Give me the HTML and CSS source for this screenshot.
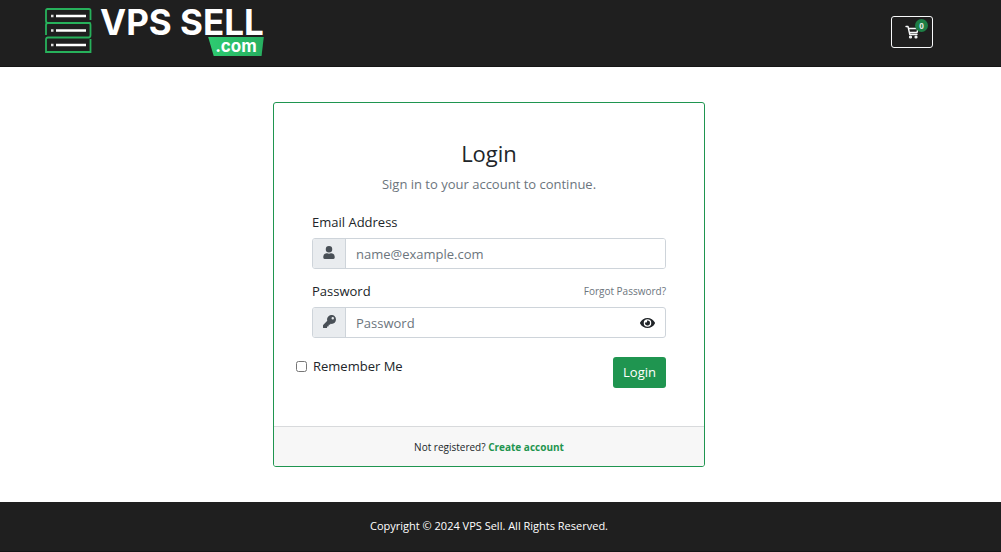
FILE: index.html
```
<!DOCTYPE html>
<html lang="en">
<head>
  <meta charset="UTF-8" />
  <meta name="viewport" content="width=device-width, initial-scale=1.0"/>
  <title>Login - VPS Sell</title>
  <link rel="stylesheet" href="styles.css">
</head>
<body>
  <header class="header">
    <a class="logo" href="#" aria-label="VPS Sell">
      <svg class="logo-rack" viewBox="0 0 48 48" width="48" height="48" fill="none" stroke="#27b15b" stroke-width="1.8">
        <path d="M46.500 13V3.500Q46.500 2 45 2H3.500Q2 2 2 3.500V14Q2 16 4 16H46.500"/>
        <path d="M2 28V18Q2 16 4 16H45Q46.500 16 46.500 18V28Q46.500 30.500 44.500 30.500H4Q2 30.500 2 32.500V45H46.500V32"/>
        <path d="M12 9H42M12 23.500H42M12 38H42" stroke="#fff" stroke-width="2.600"/>
        <path d="M7 9H9.500M7 23.500H9.500M7 38H9.500" stroke="#ddd" stroke-width="2.400"/>
      </svg>
      <span class="logo-text">
        <span class="logo-name">VPS SELL</span>
        <span class="logo-tag">.com</span>
      </span>
    </a>
    <a class="cart" href="#" aria-label="Shopping cart">
      <svg viewBox="0 0 16 16" width="16" height="16" fill="none" stroke="#f8f9fa" stroke-width="1.4" stroke-linejoin="round" stroke-linecap="round">
        <path d="M2 2.500H4L5.800 10.500H13M4.500 4.500H14L13 8.500H5.500"/>
        <circle cx="6.500" cy="13" r="0.900"/>
        <circle cx="12" cy="13" r="0.900"/>
      </svg>
      <span class="badge">0</span>
    </a>
  </header>

  <main class="main">
    <form class="card">
      <div class="card-body">
        <h1>Login</h1>
        <p class="subtext">Sign in to your account to continue.</p>

        <div class="label-row">
          <label for="email">Email Address</label>
        </div>
        <div class="input-group">
          <span class="prepend">
            <svg viewBox="0 0 448 512" width="12" height="13" fill="#495057"><path d="M224 256a128 128 0 1 0 0-256 128 128 0 0 0 0 256zm90 32h-17a174 174 0 0 1-146 0h-17C60 288 0 348 0 422v42c0 27 21 48 48 48h352c27 0 48-21 48-48v-42c0-74-60-134-134-134z"/></svg>
          </span>
          <input type="email" id="email" placeholder="name@example.com">
        </div>

        <div class="label-row">
          <label for="password">Password</label>
          <a class="forgot" href="#">Forgot Password?</a>
        </div>
        <div class="input-group">
          <span class="prepend">
            <svg viewBox="0 0 512 512" width="13" height="13" fill="#495057"><path d="M512 176c0 97-79 176-176 176-11 0-22-1-33-3l-24 27a24 24 0 0 1-18 8h-37v40c0 13-11 24-24 24h-40v40c0 13-11 24-24 24H24c-13 0-24-11-24-24v-78c0-6 3-12 7-17l162-162a176 176 0 1 1 343-55zM336 128a48 48 0 1 0 96 0 48 48 0 0 0-96 0z"/></svg>
          </span>
          <input type="password" id="password" placeholder="Password">
          <button type="button" class="reveal" aria-label="Show password">
            <svg viewBox="0 0 576 384" width="15" height="10" fill="#212529"><path fill-rule="evenodd" d="M572 177C518 71 411 0 288 0S58 71 4 177a32 32 0 0 0 0 30c54 106 161 177 284 177s230-71 284-177a32 32 0 0 0 0-30zM288 336a144 144 0 1 1 0-288 144 144 0 0 1 0 288zm0-240a95 95 0 0 0-25 4 48 48 0 0 1-67 67A96 96 0 1 0 288 96z"/></svg>
          </button>
        </div>

        <div class="actions">
          <label class="remember"><input type="checkbox"> Remember Me</label>
          <button type="submit" class="btn">Login</button>
        </div>
      </div>
      <div class="card-footer">
        Not registered? <a href="#">Create account</a>
      </div>
    </form>
  </main>

  <footer class="footer">Copyright © 2024 VPS Sell. All Rights Reserved.</footer>
</body>
</html>
```
FILE: styles.css
```
* {
  box-sizing: border-box;
}

body {
  margin: 0;
  font-family: "Open Sans", "Noto Sans", sans-serif;
  font-size: 13px;
  line-height: 20px;
  color: #212529;
  background: #fff;
}

a {
  text-decoration: none;
}

/* header */
.header {
  display: flex;
  justify-content: space-between;
  align-items: flex-start;
  padding: 7px 68px 10px 44px;
  background: #1f1f1f;
  border-bottom: 1px solid #151515;
}

.logo {
  display: flex;
  gap: 8px;
}

.logo-text {
  display: flex;
  flex-direction: column;
  align-items: flex-end;
  font-family: Inter, sans-serif;
  color: #fff;
}

.logo-name {
  font-size: 35px;
  font-weight: 700;
  line-height: 30px;
}

.logo-tag {
  padding: 0 7px;
  font-size: 17px;
  font-weight: 700;
  line-height: 19px;
  background: linear-gradient(90deg, #2ecc71, #27ae60);
  clip-path: polygon(0 0, 100% 0, 96% 100%, 10% 100%);
}

.cart {
  position: relative;
  display: flex;
  align-items: center;
  justify-content: center;
  width: 42px;
  height: 32px;
  margin-top: 9px;
  border: 1px solid #f8f9fa;
  border-radius: 3px;
}

.badge {
  position: absolute;
  top: 2px;
  right: 4px;
  width: 13px;
  height: 13px;
  border-radius: 50%;
  background: #1e7e45;
  color: #e6e6e6;
  font-size: 8px;
  font-weight: 700;
  line-height: 13px;
  text-align: center;
}

/* login card */
.main {
  padding: 35px 23px 35px 0;
}

.card {
  max-width: 432px;
  margin: 0 auto;
  border: 1px solid #1f9550;
  border-radius: 3px;
  overflow: hidden;
}

.card-body {
  padding: 38px;
}

h1 {
  margin: 0 0 9px;
  font-size: 22px;
  font-weight: 400;
  line-height: 24px;
  text-align: center;
}

.subtext {
  margin: 0 0 18px;
  color: #6c757d;
  text-align: center;
}

.label-row {
  display: flex;
  justify-content: space-between;
  align-items: center;
  margin-bottom: 6px;
}

.forgot {
  font-size: 10px;
  color: #6c757d;
}

.input-group {
  display: flex;
  height: 31px;
  margin-bottom: 12px;
  border: 1px solid #ced4da;
  border-radius: 3px;
  overflow: hidden;
}

.prepend {
  display: flex;
  justify-content: center;
  width: 33px;
  padding-top: 7px;
  background: #e9ecef;
  border-right: 1px solid #ced4da;
}

.input-group input {
  flex: 1;
  min-width: 0;
  padding: 0 10px;
  border: none;
  outline: none;
  font: inherit;
  color: #495057;
}

.input-group input::placeholder {
  color: #6c757d;
}

.reveal {
  display: flex;
  align-items: center;
  padding: 0 10px;
  border: none;
  background: none;
  cursor: pointer;
}

.actions {
  display: flex;
  justify-content: space-between;
  align-items: flex-start;
  padding-top: 7px;
}

.remember {
  display: flex;
  align-items: center;
  gap: 6px;
  margin-left: -16px;
  line-height: 18px;
}

.remember input {
  width: 11px;
  height: 11px;
  margin: 0;
}

.btn {
  padding: 5px 10px;
  border: none;
  border-radius: 3px;
  background: #1f9550;
  color: #fff;
  font: inherit;
  line-height: 21px;
  cursor: pointer;
}

.card-footer {
  padding: 10px 10px 9px;
  border-top: 1px solid #d8dadc;
  background: #f7f7f7;
  font-size: 10px;
  text-align: center;
}

.card-footer a {
  color: #1f9550;
  font-weight: 700;
}

/* footer */
.footer {
  padding: 14px 23px 15px 0;
  border-bottom: 1px solid #151515;
  background: #1f1f1f;
  color: #fff;
  font-size: 11px;
  text-align: center;
}
```
